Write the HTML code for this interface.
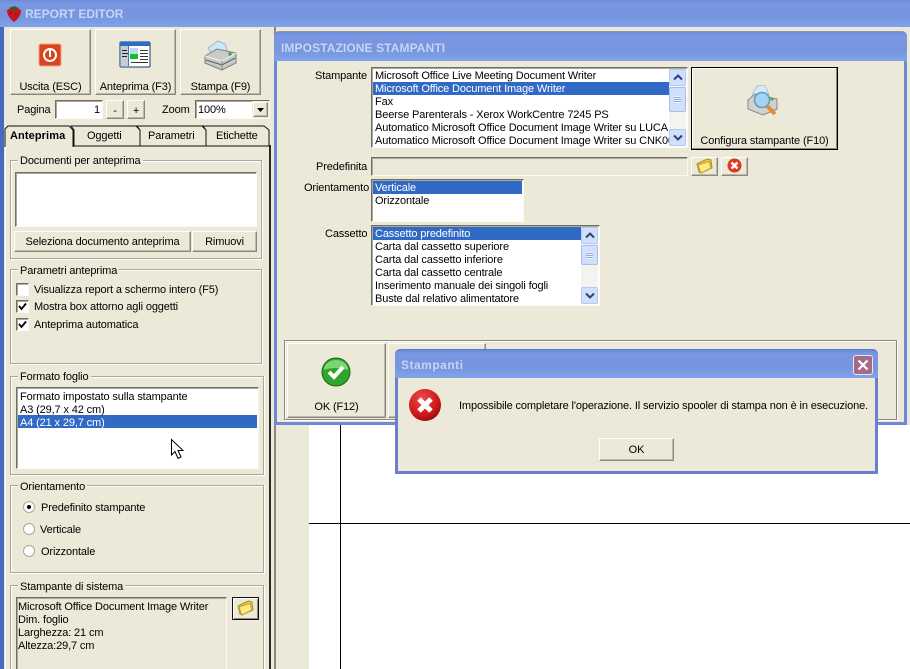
<!DOCTYPE html>
<html><head><meta charset="utf-8"><style>
html,body{margin:0;padding:0;width:910px;height:669px;overflow:hidden;background:#fff}
body{position:relative;font:11px/15px "Liberation Sans",sans-serif;color:#000;letter-spacing:-.13px}
div,span,svg{position:absolute;box-sizing:border-box}
.t{white-space:nowrap;margin-top:1px}
.bg{background:#ece9d8}
.btn{background:#ece9d8;border:1px solid;border-color:#fff #8a887c #8a887c #fff;box-shadow:inset -1px -1px 0 #bdbaa8,0 0 0 1px #ece9d8}
.btn .t{left:0;right:0;text-align:center}
.sink{background:#fff;border:1px solid;border-color:#716f64 #fbfaf5 #fbfaf5 #716f64;box-shadow:inset 1px 1px 0 #aca899}
.grp{border:1px solid #aca899;box-shadow:1px 1px 0 #fff,inset 1px 1px 0 #fff}
.lg{background:#ece9d8;padding:0 2px;left:7px;top:-7px;white-space:nowrap;line-height:15px}
.sel{background:#316ac5;height:13px}
.title{background:linear-gradient(#6c8ad8 0,#7a98e2 15%,#7695de 60%,#7fa3ea 100%)}
.wt{font-weight:bold;color:#c5d5f4;white-space:nowrap;letter-spacing:0}
.sb{background:#f4f3ee;width:17px}
.arr{left:0;width:17px;height:17px;border:1px solid #b4c8f6;border-radius:2px;background:#d2dffb}
.thumb{left:0;width:17px;border:1px solid #a8bcf0;border-radius:2px;background:#d2dffb}
</style></head><body>

<!-- main window -->
<div class="bg" style="left:0;top:0;width:910px;height:669px"></div>
<div style="left:0;top:0;width:4px;height:669px;background:#4a68c0"></div>
<div class="title" style="left:0;top:0;width:910px;height:27px"></div>
<svg style="left:6px;top:5px" width="16" height="18" viewBox="0 0 16 18"><path d="M1 5 Q8 1 15 5 Q15 12 8 17 Q1 12 1 5Z" fill="#c81420"/><path d="M3 3 L8 1 L13 3 L10 5 L6 5Z" fill="#3a5a20"/><circle cx="5" cy="8" r="1" fill="#702020"/><circle cx="10" cy="9" r="1" fill="#702020"/></svg>
<div class="wt" style="left:25px;top:7px;font-size:12px;line-height:15px">REPORT EDITOR</div>

<!-- toolbar -->
<div class="btn" style="left:10px;top:29px;width:81px;height:66px"><div class="t" style="top:49px">Uscita (ESC)</div></div>
<svg style="left:38px;top:43px" width="24" height="24" viewBox="0 0 24 24"><rect x="1" y="1" width="22" height="22" rx="2" fill="#d9431f" stroke="#f3a27e"/><circle cx="12" cy="12" r="6" fill="none" stroke="#fff" stroke-width="2"/><rect x="11" y="7" width="2" height="7" fill="#fff"/></svg>
<div class="btn" style="left:95px;top:29px;width:81px;height:66px"><div class="t" style="top:49px">Anteprima (F3)</div></div>
<svg style="left:119px;top:41px" width="32" height="27" viewBox="0 0 32 27"><rect x="1" y="1" width="30" height="25" rx="1" fill="#fff" stroke="#17376e"/><rect x="1" y="1" width="30" height="4" fill="#2a6ec6"/><rect x="2" y="5" width="8" height="20" fill="#c4ccd8"/><rect x="9" y="5" width="1" height="20" fill="#3a7ac8"/><rect x="3" y="9" width="5" height="1" fill="#222"/><rect x="3" y="12" width="6" height="1" fill="#222"/><rect x="3" y="15" width="5" height="1" fill="#222"/><rect x="11" y="7" width="8" height="6" fill="#b9dcec"/><rect x="11" y="13" width="8" height="5" fill="#10c020"/><g fill="#333"><rect x="21" y="9" width="8" height="1"/><rect x="21" y="12" width="8" height="1"/><rect x="21" y="15" width="8" height="1"/><rect x="21" y="18" width="8" height="1"/><rect x="12" y="21" width="17" height="1"/></g></svg>
<div class="btn" style="left:180px;top:29px;width:81px;height:66px"><div class="t" style="top:49px">Stampa (F9)</div></div>
<svg style="left:204px;top:39px" width="33" height="32" viewBox="0 0 33 32"><path d="M4 9 L14 2 L21 5 L24 14 L12 20Z" fill="#cfe6f8" stroke="#9ab6cc"/><path d="M1 17 L13 10 L32 14 L32 24 L18 31 L1 24Z" fill="#c8ccc8" stroke="#7a807a"/><path d="M1 17 L18 22 L32 14" fill="none" stroke="#f0f2f0"/><path d="M2 21 L18 26 L31 19" fill="none" stroke="#5a5f5a"/><path d="M18 22 L18 31" stroke="#888"/><circle cx="26" cy="15" r="1.8" fill="#3db04a"/></svg>

<div class="t" style="left:17px;top:102px">Pagina</div>
<div class="sink" style="left:55px;top:100px;width:48px;height:19px"></div>
<div class="t" style="left:55px;top:102px;width:45px;text-align:right">1</div>
<div class="btn" style="left:106px;top:100px;width:18px;height:19px"><div class="t" style="top:2px">-</div></div>
<div class="btn" style="left:127px;top:100px;width:18px;height:19px"><div class="t" style="top:2px">+</div></div>
<div class="t" style="left:162px;top:102px">Zoom</div>
<div class="sink" style="left:195px;top:100px;width:75px;height:19px"></div>
<div class="t" style="left:198px;top:102px">100%</div>
<div class="btn" style="left:253px;top:102px;width:15px;height:15px"><svg style="left:3px;top:5px" width="7" height="4"><path d="M0 0H7L3.5 4Z"/></svg></div>

<!-- tabs -->
<div class="bg" style="left:5px;top:145px;width:266px;height:524px;border-left:1px solid #fff;border-right:2px solid #2a2a26;border-top:1px solid #111"></div>
<div style="left:274px;top:27px;width:2px;height:642px;background:#8a887c"></div>
<svg style="left:4px;top:125px" width="268" height="22"><g fill="#ece9d8" stroke="#111"><path d="M70 21V5L67 1H132L136 5V21Z"/><path d="M136 21V5L133 1H198L202 5V21Z"/><path d="M202 21V5L199 1H260L265 5V21Z"/></g><path d="M1 22V4L4 1H65L69 5V22" fill="#ece9d8" stroke="#111"/><path d="M2 20H68V22H2Z" fill="#ece9d8"/></svg>
<div class="t" style="left:10px;top:128px;font-weight:bold;letter-spacing:.1px">Anteprima</div>
<div class="t" style="left:87px;top:128px">Oggetti</div>
<div class="t" style="left:148px;top:128px">Parametri</div>
<div class="t" style="left:216px;top:128px">Etichette</div>

<!-- group 1 -->
<div class="grp" style="left:10px;top:160px;width:252px;height:99px"><div class="lg">Documenti per anteprima</div></div>
<div class="sink" style="left:15px;top:172px;width:242px;height:55px"></div>
<div class="btn" style="left:14px;top:231px;width:177px;height:21px"><div class="t" style="top:2px">Seleziona documento anteprima</div></div>
<div class="btn" style="left:192px;top:231px;width:65px;height:21px"><div class="t" style="top:2px">Rimuovi</div></div>

<!-- group 2 -->
<div class="grp" style="left:10px;top:269px;width:252px;height:95px"><div class="lg" style="top:-6px">Parametri anteprima</div></div>
<div class="sink" style="left:16px;top:283px;width:13px;height:13px"></div>
<div class="t" style="left:34px;top:282px">Visualizza report a schermo intero (F5)</div>
<div class="sink" style="left:16px;top:300px;width:13px;height:13px"></div>
<svg style="left:18px;top:302px" width="9" height="9"><path d="M1 4L3.5 7L8 1.5" fill="none" stroke="#000" stroke-width="1.8"/></svg>
<div class="t" style="left:34px;top:299px">Mostra box attorno agli oggetti</div>
<div class="sink" style="left:16px;top:318px;width:13px;height:13px"></div>
<svg style="left:18px;top:320px" width="9" height="9"><path d="M1 4L3.5 7L8 1.5" fill="none" stroke="#000" stroke-width="1.8"/></svg>
<div class="t" style="left:34px;top:317px">Anteprima automatica</div>

<!-- group 3 -->
<div class="grp" style="left:10px;top:376px;width:254px;height:99px"><div class="lg">Formato foglio</div></div>
<div class="sink" style="left:16px;top:387px;width:243px;height:82px"></div>
<div class="sel" style="left:18px;top:415px;width:239px"></div>
<div class="t" style="left:20px;top:389px">Formato impostato sulla stampante</div>
<div class="t" style="left:20px;top:402px">A3 (29,7 x 42 cm)</div>
<div class="t" style="left:20px;top:415px;color:#fff">A4 (21 x 29,7 cm)</div>
<svg style="left:170px;top:438px" width="15" height="23"><path d="M1.5 1.5V17L5 13.5L8 20.5L11 19L8 12.5H13Z" fill="#fff" stroke="#000"/></svg>

<!-- group 4 -->
<div class="grp" style="left:10px;top:485px;width:254px;height:88px"><div class="lg" style="top:-6px">Orientamento</div></div>
<svg style="left:22px;top:500px" width="14" height="58"><g fill="#fff" stroke="#aca899"><circle cx="7" cy="7" r="5.5"/><circle cx="7" cy="29" r="5.5"/><circle cx="7" cy="51" r="5.5"/></g><circle cx="7" cy="7" r="2" fill="#000"/></svg>
<div class="t" style="left:41px;top:500px">Predefinito stampante</div>
<div class="t" style="left:40px;top:522px">Verticale</div>
<div class="t" style="left:41px;top:544px">Orizzontale</div>

<!-- group 5 -->
<div class="grp" style="left:10px;top:585px;width:254px;height:100px"><div class="lg" style="top:-6px">Stampante di sistema</div></div>
<div class="sink" style="left:16px;top:597px;width:211px;height:90px;background:#ece9d8"></div>
<div class="t" style="left:18px;top:599px">Microsoft Office Document Image Writer</div>
<div class="t" style="left:18px;top:612px">Dim. foglio</div>
<div class="t" style="left:18px;top:625px">Larghezza: 21 cm</div>
<div class="t" style="left:18px;top:638px">Altezza:29,7 cm</div>
<div style="left:232px;top:597px;width:27px;height:23px;background:#ece9d8;border:1px solid #111;box-shadow:inset 1px 1px 0 #fff,inset -1px -1px 0 #8a887c"></div>
<svg style="left:237px;top:600px" width="17" height="16" viewBox="0 0 17 16"><path d="M1 6L9 2L12 1L15 2L16 10L5 15L3 14Z" fill="#e8c850" stroke="#b08a20"/><path d="M2 7L13 3.5L15 10L5 15Z" fill="#fdec80" stroke="#c8a030"/></svg>

<!-- right side -->
<div style="left:309px;top:425px;width:601px;height:244px;background:#fff"></div>
<div style="left:340px;top:425px;width:1px;height:244px;background:#000"></div>
<div style="left:309px;top:523px;width:601px;height:1px;background:#000"></div>

<!-- Impostazione window -->
<div class="bg" style="left:274px;top:31px;width:633px;height:394px;border:3px solid #7088d8;border-top:0;border-radius:5px 5px 0 0"></div>
<div class="title" style="left:274px;top:31px;width:633px;height:30px;border-radius:6px 6px 0 0;border-top:1px solid #8a96b0"></div>
<div class="wt" style="left:281px;top:41px;font-size:12px;line-height:15px;letter-spacing:.1px">IMPOSTAZIONE STAMPANTI</div>

<div class="t" style="left:315px;top:68px">Stampante</div>
<div class="sink" style="left:371px;top:67px;width:317px;height:81px"></div>
<div class="sel" style="left:373px;top:82px;width:296px"></div>
<div class="t" style="left:375px;top:68px;width:294px;overflow:hidden">Microsoft Office Live Meeting Document Writer</div>
<div class="t" style="left:375px;top:81px;width:294px;overflow:hidden;color:#fff">Microsoft Office Document Image Writer</div>
<div class="t" style="left:375px;top:94px;width:294px;overflow:hidden">Fax</div>
<div class="t" style="left:375px;top:107px;width:294px;overflow:hidden">Beerse Parenterals - Xerox WorkCentre 7245 PS</div>
<div class="t" style="left:375px;top:120px;width:294px;overflow:hidden">Automatico Microsoft Office Document Image Writer su LUCA</div>
<div class="t" style="left:375px;top:133px;width:294px;overflow:hidden">Automatico Microsoft Office Document Image Writer su CNK00</div>
<div class="sb" style="left:669px;top:69px;height:77px">
 <div class="arr" style="top:0"><svg style="left:3px;top:4px" width="10" height="7"><path d="M1 5.5L5 1.5L9 5.5" fill="none" stroke="#2a3f80" stroke-width="2"/></svg></div>
 <div class="thumb" style="top:18px;height:25px"><div style="left:4px;top:8px;width:7px;height:7px;background:repeating-linear-gradient(#eef3ff 0 1px,#8ea8e0 1px 2px)"></div></div>
 <div class="arr" style="top:60px"><svg style="left:3px;top:4px" width="10" height="7"><path d="M1 1.5L5 5.5L9 1.5" fill="none" stroke="#2a3f80" stroke-width="2"/></svg></div>
</div>

<div class="btn" style="left:691px;top:67px;width:147px;height:83px;border:1px solid #000;box-shadow:inset -1px -1px 0 #8a887c,inset 1px 1px 0 #fff"><div class="t" style="top:65px">Configura stampante (F10)</div></div>
<svg style="left:747px;top:85px" width="34" height="32" viewBox="0 0 34 32"><path d="M5 10L10 1L18 0L22 10Z" fill="#d8e8f8" stroke="#b0c4d8"/><path d="M1 15L8 9L30 14V24L16 30L1 24Z" fill="#d0d2d0" stroke="#888"/><circle cx="25" cy="14" r="1.6" fill="#4cb050"/><circle cx="15" cy="15" r="7.5" fill="#a5d4ee" stroke="#5c9cc0" stroke-width="1.5"/><path d="M20 21L28 29" stroke="#e88a30" stroke-width="4"/></svg>

<div class="t" style="left:316px;top:159px">Predefinita</div>
<div class="sink" style="left:371px;top:157px;width:317px;height:19px;background:#ece9d8"></div>
<div class="btn" style="left:691px;top:157px;width:27px;height:19px"></div>
<svg style="left:696px;top:158px" width="17" height="16" viewBox="0 0 17 16"><path d="M1 6L9 2L12 1L15 2L16 10L5 15L3 14Z" fill="#e8c850" stroke="#b08a20"/><path d="M2 7L13 3.5L15 10L5 15Z" fill="#fdec80" stroke="#c8a030"/></svg>
<div class="btn" style="left:721px;top:157px;width:27px;height:19px"></div>
<svg style="left:727px;top:158px" width="15" height="15" viewBox="0 0 15 15"><circle cx="7.5" cy="7.5" r="7" fill="#dd3a22"/><path d="M4.5 4.5L10.5 10.5M10.5 4.5L4.5 10.5" stroke="#fff" stroke-width="2.4"/></svg>

<div class="t" style="left:304px;top:180px">Orientamento</div>
<div class="sink" style="left:371px;top:179px;width:153px;height:43px"></div>
<div class="sel" style="left:373px;top:181px;width:149px"></div>
<div class="t" style="left:375px;top:180px;color:#fff">Verticale</div>
<div class="t" style="left:375px;top:193px">Orizzontale</div>

<div class="t" style="left:325px;top:226px">Cassetto</div>
<div class="sink" style="left:371px;top:225px;width:229px;height:81px"></div>
<div class="sel" style="left:373px;top:227px;width:208px"></div>
<div class="t" style="left:375px;top:226px;color:#fff">Cassetto predefinito</div>
<div class="t" style="left:375px;top:239px">Carta dal cassetto superiore</div>
<div class="t" style="left:375px;top:252px">Carta dal cassetto inferiore</div>
<div class="t" style="left:375px;top:265px">Carta dal cassetto centrale</div>
<div class="t" style="left:375px;top:278px">Inserimento manuale dei singoli fogli</div>
<div class="t" style="left:375px;top:291px">Buste dal relativo alimentatore</div>
<div class="sb" style="left:581px;top:227px;height:77px">
 <div class="arr" style="top:0"><svg style="left:3px;top:4px" width="10" height="7"><path d="M1 5.5L5 1.5L9 5.5" fill="none" stroke="#2a3f80" stroke-width="2"/></svg></div>
 <div class="thumb" style="top:18px;height:20px"><div style="left:4px;top:6px;width:7px;height:7px;background:repeating-linear-gradient(#eef3ff 0 1px,#8ea8e0 1px 2px)"></div></div>
 <div class="arr" style="top:60px"><svg style="left:3px;top:4px" width="10" height="7"><path d="M1 1.5L5 5.5L9 1.5" fill="none" stroke="#2a3f80" stroke-width="2"/></svg></div>
</div>

<div class="grp" style="left:284px;top:340px;width:613px;height:80px;border-color:#8a887c"></div>
<div class="btn" style="left:287px;top:343px;width:99px;height:75px"><div class="t" style="top:55px">OK (F12)</div></div>
<svg style="left:321px;top:357px" width="30" height="30" viewBox="0 0 30 30"><circle cx="15" cy="15" r="14" fill="#2fa52a" stroke="#1a6a18"/><path d="M3 13A12 10 0 0 1 27 13Q15 9 3 13Z" fill="#7cd672"/><path d="M8 15L13 20L22 10" fill="none" stroke="#fff" stroke-width="4"/></svg>
<div class="btn" style="left:388px;top:343px;width:98px;height:75px"></div>

<!-- Stampanti dialog -->
<div class="bg" style="left:395px;top:349px;width:483px;height:125px;border:3px solid #6b7fd0;border-top:0;border-radius:5px 5px 0 0"></div>
<div class="title" style="left:395px;top:349px;width:483px;height:29px;border-radius:6px 6px 0 0;border-top:1px solid #5a78c8"></div>
<div class="wt" style="left:401px;top:358px;font-size:12px;line-height:15px;letter-spacing:.5px">Stampanti</div>
<div style="left:853px;top:355px;width:20px;height:20px;background:#a56a88;border:1px solid #e8e8f4;border-radius:3px"><svg style="left:3px;top:3px" width="12" height="12"><path d="M1.5 1.5L10.5 10.5M10.5 1.5L1.5 10.5" stroke="#fff" stroke-width="2.2"/></svg></div>
<svg style="left:408px;top:388px" width="34" height="34" viewBox="0 0 34 34"><defs><radialGradient id="r" cx=".4" cy=".3" r=".8"><stop offset="0" stop-color="#ee4a4a"/><stop offset=".7" stop-color="#c81416"/><stop offset="1" stop-color="#7a0a0a"/></radialGradient></defs><circle cx="17" cy="17" r="16" fill="url(#r)"/><path d="M11 11L23 23M23 11L11 23" stroke="#fff" stroke-width="5"/></svg>
<div class="t" style="left:459px;top:398px">Impossibile completare l'operazione. Il servizio spooler di stampa non è in esecuzione.</div>
<div class="btn" style="left:599px;top:438px;width:75px;height:23px"><div class="t" style="top:3px">OK</div></div>

</body></html>
